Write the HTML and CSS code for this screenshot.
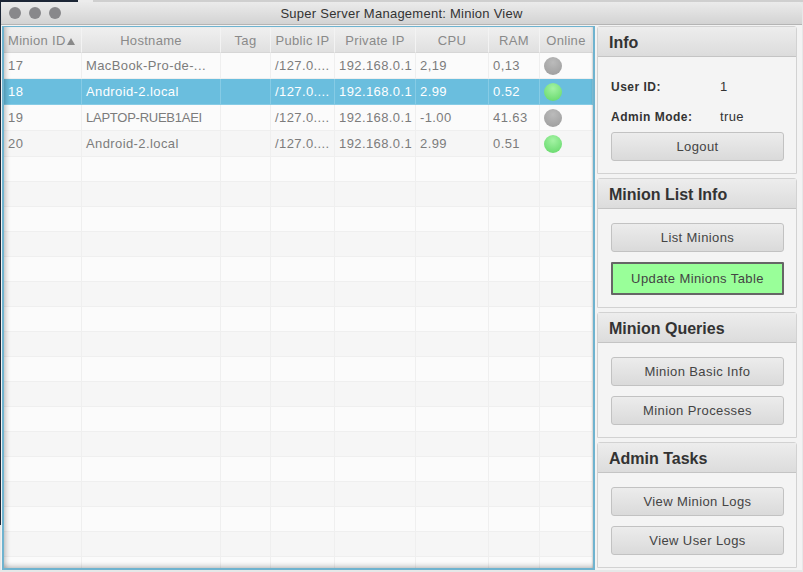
FILE: index.html
```html
<!DOCTYPE html>
<html lang="en">
<head>
<title>Super Server Management: Minion View</title>
<link rel="stylesheet" href="styles.css">
</head>
<body>

<div class="window">
    <header class="titlebar">
        <div class="lights">
            <span class="light"></span>
            <span class="light"></span>
            <span class="light"></span>
        </div>
        <h1>Super Server Management: Minion View</h1>
    </header>

    <main class="content">
        <div class="table-box">
            <table class="minions">
                <colgroup>
                    <col class="c-id"><col class="c-host"><col class="c-tag"><col class="c-pub">
                    <col class="c-priv"><col class="c-cpu"><col class="c-ram"><col class="c-online">
                </colgroup>
                <thead>
                    <tr>
                        <th class="sorted">Minion ID<span class="arrow"></span></th>
                        <th>Hostname</th>
                        <th>Tag</th>
                        <th>Public IP</th>
                        <th>Private IP</th>
                        <th>CPU</th>
                        <th>RAM</th>
                        <th>Online</th>
                    </tr>
                </thead>
                <tbody>
                    <tr class="filled">
                        <td>17</td><td>MacBook-Pro-de-...</td><td></td><td>/127.0....</td>
                        <td>192.168.0.1</td><td>2,19</td><td>0,13</td>
                        <td><span class="dot off"></span></td>
                    </tr>
                    <tr class="filled selected">
                        <td>18</td><td>Android-2.local</td><td></td><td>/127.0....</td>
                        <td>192.168.0.1</td><td>2.99</td><td>0.52</td>
                        <td><span class="dot on"></span></td>
                    </tr>
                    <tr class="filled">
                        <td>19</td><td class="tight">LAPTOP-RUEB1AEI</td><td></td><td>/127.0....</td>
                        <td>192.168.0.1</td><td>-1.00</td><td>41.63</td>
                        <td><span class="dot off"></span></td>
                    </tr>
                    <tr class="filled">
                        <td>20</td><td>Android-2.local</td><td></td><td>/127.0....</td>
                        <td>192.168.0.1</td><td>2.99</td><td>0.51</td>
                        <td><span class="dot on"></span></td>
                    </tr>
                    <tr><td></td><td></td><td></td><td></td><td></td><td></td><td></td><td></td></tr>
                    <tr><td></td><td></td><td></td><td></td><td></td><td></td><td></td><td></td></tr>
                    <tr><td></td><td></td><td></td><td></td><td></td><td></td><td></td><td></td></tr>
                    <tr><td></td><td></td><td></td><td></td><td></td><td></td><td></td><td></td></tr>
                    <tr><td></td><td></td><td></td><td></td><td></td><td></td><td></td><td></td></tr>
                    <tr><td></td><td></td><td></td><td></td><td></td><td></td><td></td><td></td></tr>
                    <tr><td></td><td></td><td></td><td></td><td></td><td></td><td></td><td></td></tr>
                    <tr><td></td><td></td><td></td><td></td><td></td><td></td><td></td><td></td></tr>
                    <tr><td></td><td></td><td></td><td></td><td></td><td></td><td></td><td></td></tr>
                    <tr><td></td><td></td><td></td><td></td><td></td><td></td><td></td><td></td></tr>
                    <tr><td></td><td></td><td></td><td></td><td></td><td></td><td></td><td></td></tr>
                    <tr><td></td><td></td><td></td><td></td><td></td><td></td><td></td><td></td></tr>
                    <tr><td></td><td></td><td></td><td></td><td></td><td></td><td></td><td></td></tr>
                    <tr><td></td><td></td><td></td><td></td><td></td><td></td><td></td><td></td></tr>
                    <tr><td></td><td></td><td></td><td></td><td></td><td></td><td></td><td></td></tr>
                    <tr><td></td><td></td><td></td><td></td><td></td><td></td><td></td><td></td></tr>
                    <tr><td></td><td></td><td></td><td></td><td></td><td></td><td></td><td></td></tr>
                </tbody>
            </table>
        </div>

        <aside class="side">
            <section class="panel">
                <h2>Info</h2>
                <div class="panel-body">
                    <dl class="info">
                        <dt>User ID:</dt><dd>1</dd>
                        <dt>Admin Mode:</dt><dd>true</dd>
                    </dl>
                    <button>Logout</button>
                </div>
            </section>
            <section class="panel">
                <h2>Minion List Info</h2>
                <div class="panel-body">
                    <button>List Minions</button>
                    <button class="update">Update Minions Table</button>
                </div>
            </section>
            <section class="panel">
                <h2>Minion Queries</h2>
                <div class="panel-body">
                    <button>Minion Basic Info</button>
                    <button>Minion Processes</button>
                </div>
            </section>
            <section class="panel">
                <h2>Admin Tasks</h2>
                <div class="panel-body">
                    <button>View Minion Logs</button>
                    <button>View User Logs</button>
                </div>
            </section>
        </aside>
    </main>
</div>

</body>
</html>
```

FILE: styles.css
```css
html, body {
  margin: 0;
  height: 100%;
  overflow: hidden;
}
body {
  /* bits of the desktop showing around the window */
  background-color: #e6e8e8;
  background-image:
    linear-gradient(to right, #1c2636 0, #1c2636 78px, #ececec 78px, #ececec 93px, #cfcfcf 93px),
    linear-gradient(#1c2636, #1c2636);
  background-size: 100% 2px, 1px 525px;
  background-repeat: no-repeat;
  padding: 2px 1px 0 1px;
  box-sizing: border-box;
  font-family: "Liberation Sans", Arial, sans-serif;
  font-size: 13px;
  letter-spacing: 0.4px;
}

/* window */
.window {
  height: 568px;
  background-color: #f3f3f3;
  border-radius: 5px 5px 0 0;
  display: flex;
  flex-direction: column;
  overflow: hidden;
}
.titlebar {
  height: 22px;
  flex: none;
  position: relative;
  display: flex;
  align-items: center;
  justify-content: center;
  background: linear-gradient(#ebebeb, #d3d3d3);
  border-bottom: 1px solid #b4b4b4;
}
.titlebar h1 {
  margin: 0;
  font-size: 13px;
  font-weight: normal;
  letter-spacing: 0.25px;
  color: #333;
}
.lights {
  position: absolute;
  left: 8px;
  top: 5px;
  display: flex;
  gap: 8px;
}
.light {
  width: 12px;
  height: 12px;
  border-radius: 50%;
  background-color: #88888b;
}

.content {
  flex: 1;
  min-height: 0;
  display: flex;
  align-items: flex-start;
  padding: 1px 0 0 1px;
}

/* table */
.table-box {
  width: 589px;
  height: 541px;
  flex: none;
  overflow: hidden;
  border: 2px solid #6fb3cf;
  border-top-width: 1px;
  background-color: #fafafa;
  position: relative;
}
.table-box::after {
  content: "";
  position: absolute;
  inset: 0;
  box-shadow: inset 5px 0 5px -3px rgba(0,0,0,0.22), inset 0 -5px 5px -3px rgba(0,0,0,0.22), inset -3px 0 3px -3px rgba(0,0,0,0.2);
  pointer-events: none;
}
.minions {
  table-layout: fixed;
  width: 589px;
  border-collapse: separate;
  border-spacing: 0;
  color: #7c7c7c;
}
.c-id { width: 78px; }
.c-host { width: 139px; }
.c-tag { width: 50px; }
.c-pub { width: 64px; }
.c-priv { width: 81px; }
.c-cpu { width: 73px; }
.c-ram { width: 51px; }
.minions th {
  height: 23px;
  padding: 2px 0 0;
  font-weight: normal;
  letter-spacing: 0.3px;
  text-align: center;
  white-space: nowrap;
  overflow: hidden;
  color: #8a8a8a;
  background: linear-gradient(#f0f0f0, #e0e0e0);
  border-right: 1px solid #f3f3f3;
  border-bottom: 1px solid #d6d6d6;
}
.minions th.sorted {
  text-align: left;
  padding-left: 4px;
}
.arrow {
  display: inline-block;
  width: 0;
  height: 0;
  margin-left: 1px;
  border-left: 4px solid transparent;
  border-right: 4px solid transparent;
  border-bottom: 7px solid #8a8a8a;
}
.minions td {
  height: 25px;
  padding: 0 0 0 4px;
  white-space: nowrap;
  overflow: hidden;
  box-sizing: border-box;
  background-color: #fbfbfb;
  border-right: 1px solid #efefef;
  border-bottom: 1px solid #efefef;
}
.minions tr.filled td {
  height: 26px;
}
.minions td.tight {
  letter-spacing: -0.25px;
}
.minions tbody tr:nth-child(even) td {
  background-color: #f6f6f6;
}
.minions tbody tr.selected td {
  background-color: #6abede;
  color: #fff;
  border-right-color: #86cbe5;
  border-bottom-color: #86cbe5;
}
.dot {
  display: block;
  width: 18px;
  height: 18px;
  border-radius: 50%;
}
.off {
  background: radial-gradient(circle at 50% 30%, #bbb, #9a9a9a);
}
.on {
  background: radial-gradient(circle at 50% 30%, #a4f3a4, #5fd665);
}

/* right side */
.side {
  flex: none;
  width: 200px;
  margin-left: 2px;
  display: flex;
  flex-direction: column;
  gap: 4px;
}
.panel {
  border: 1px solid #d2d2d2;
  border-radius: 3px 3px 0 0;
  background-color: #f4f4f4;
  box-sizing: border-box;
}
.panel h2 {
  margin: 0;
  height: 29px;
  line-height: 31px;
  padding-left: 11px;
  font-size: 16px;
  letter-spacing: 0;
  color: #333;
  background: linear-gradient(#ededed, #dcdcdc);
  border-bottom: 1px solid #c4c4c4;
}
.panel-body {
  padding: 14px 12px 12px 13px;
  display: flex;
  flex-direction: column;
  gap: 10px;
}
.info {
  margin: 0 0 -9px;
  display: grid;
  grid-template-columns: 109px auto;
  grid-auto-rows: 30px;
  align-items: center;
  color: #333;
}
.info dt {
  padding-top: 2px;
  font-weight: bold;
  font-size: 12px;
  letter-spacing: 0.5px;
}
.info dd {
  margin: 0;
}
button {
  display: block;
  width: 173px;
  height: 29px;
  padding: 0;
  font: inherit;
  letter-spacing: inherit;
  color: #444;
  background: linear-gradient(#ececec, #dadada);
  border: 1px solid #c2c2c2;
  border-radius: 3px;
}
button.update {
  height: 33px;
  background: #99ff99;
  border: 2px solid #666;
  border-radius: 1px;
}
```
